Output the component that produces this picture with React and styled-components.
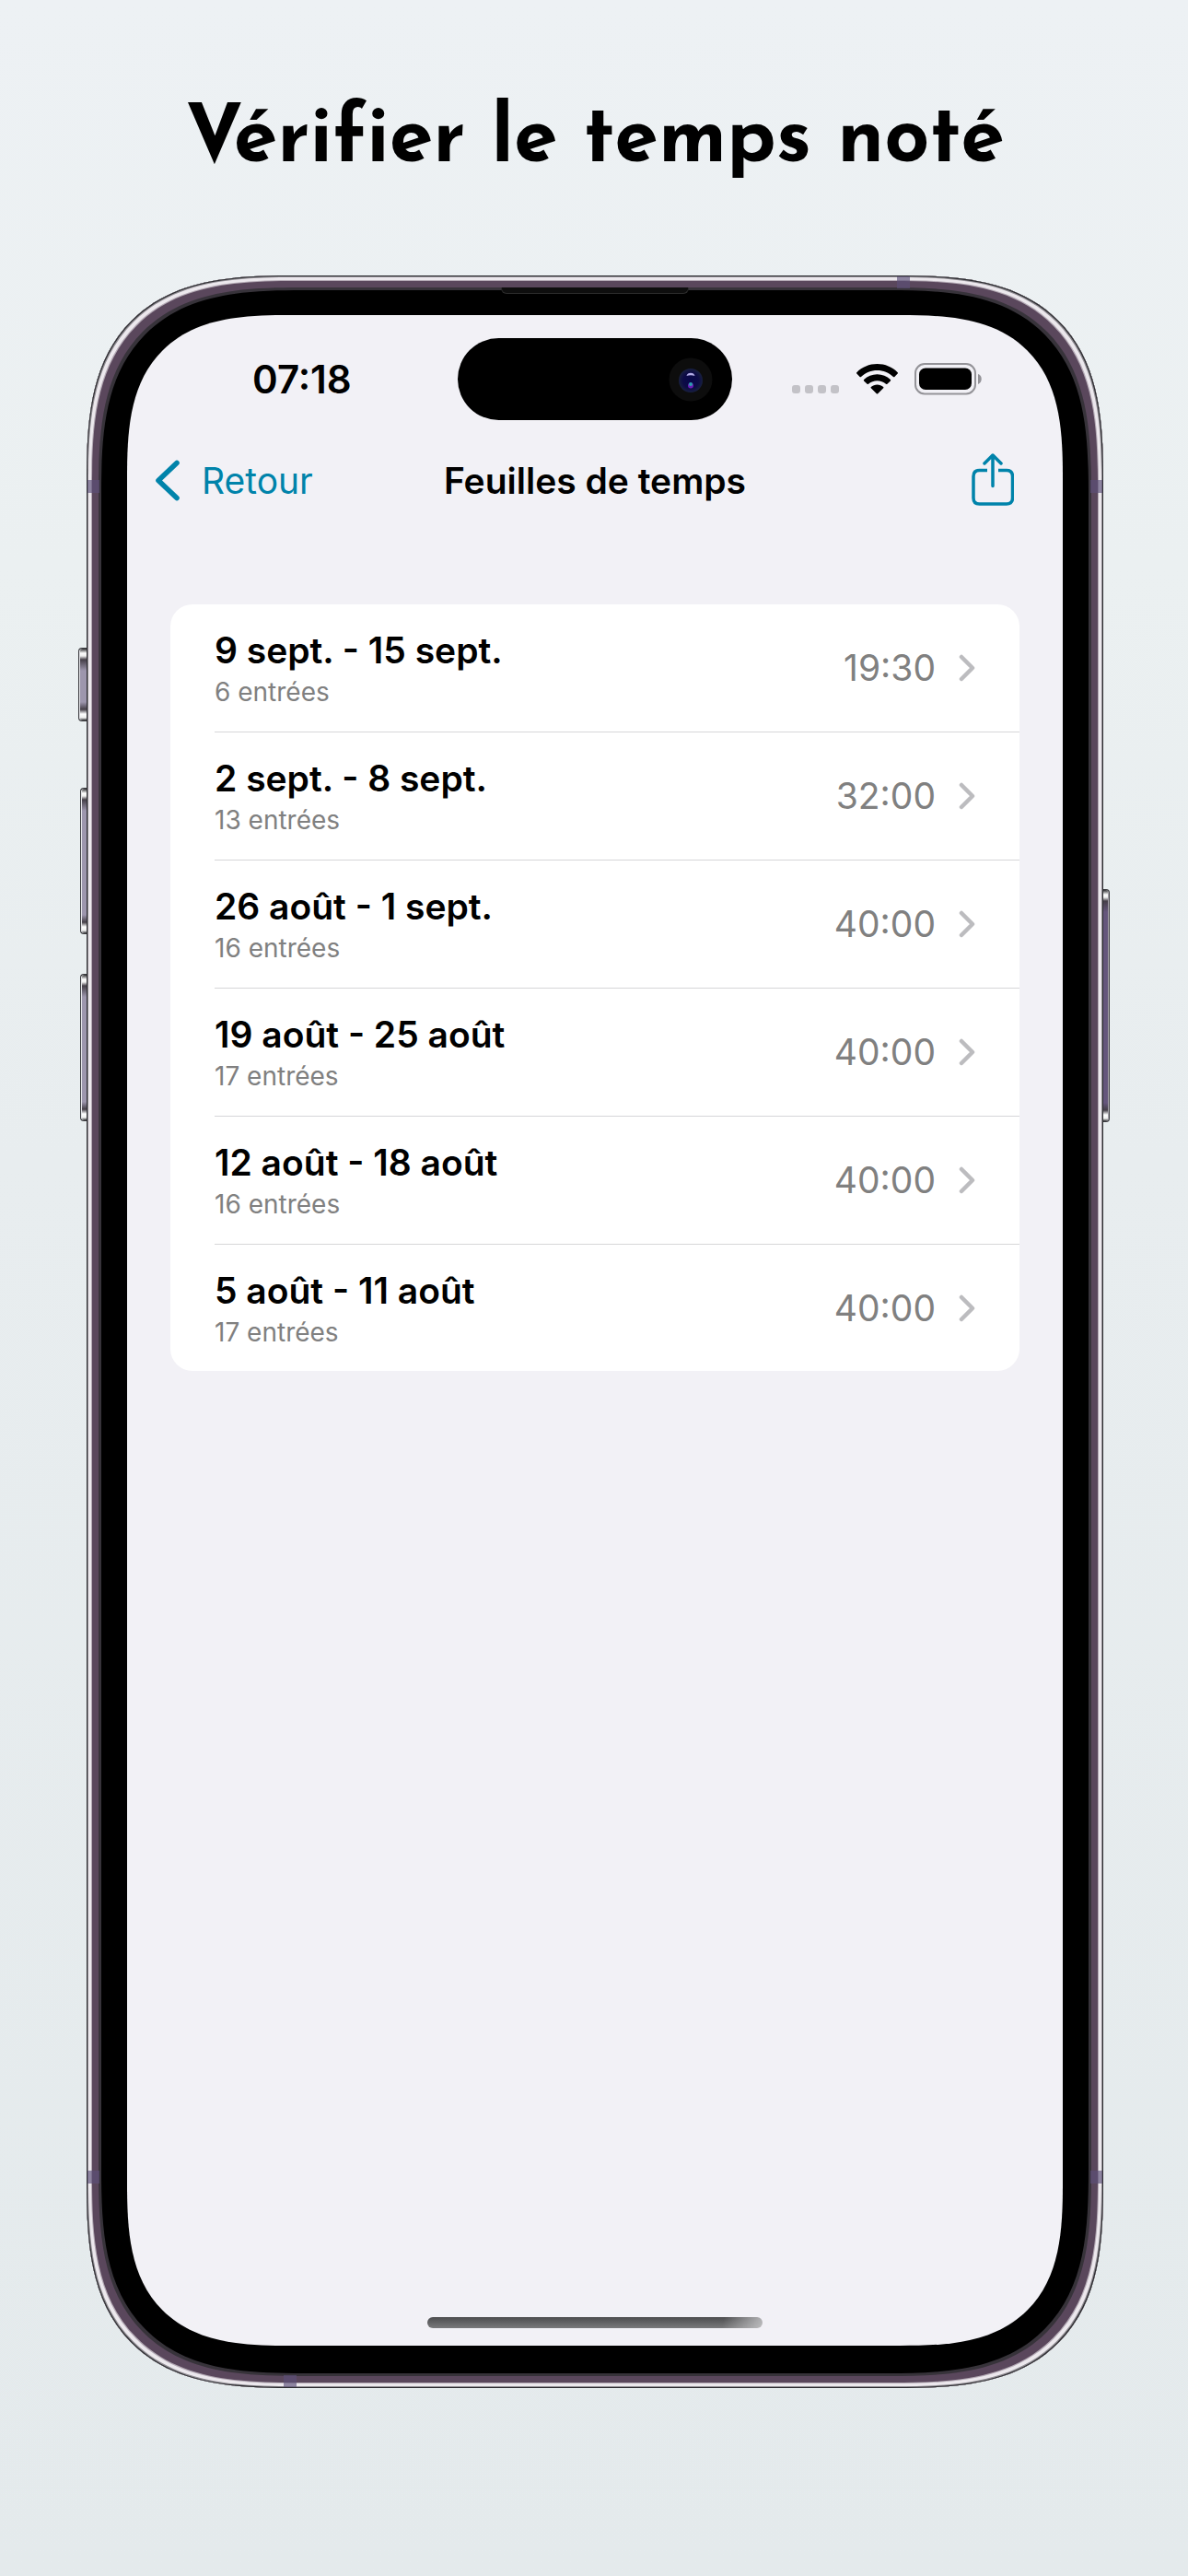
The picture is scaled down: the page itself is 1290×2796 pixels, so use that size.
import React from "react";
import styled, { createGlobalStyle, css } from "styled-components";

const GlobalStyle = createGlobalStyle`
  *, *::before, *::after { box-sizing: border-box; }
  body {
    margin: 0;
    background: #e4e9ec;
    font-family: Inter, "Noto Sans", sans-serif;
    color: #000;
  }
`;

const Page = styled.main`
  display: flex;
  flex-direction: column;
  align-items: center;
  gap: 91px;
  min-height: 100vh;
  padding: 100px 92px 96px 94px;
  background: linear-gradient(180deg, #edf1f4 0%, #ebf0f1 22%, #e8edef 45%, #e4eaec 100%);
`;

const Headline = styled.h1`
  margin: 0;
  font-family: "Josefin Sans", Lato, sans-serif;
  font-size: 86px;
  font-weight: 700;
  font-variant-ligatures: none;
  line-height: 108px;
  white-space: nowrap;
`;

const Phone = styled.div`
  position: relative;
  display: flex;
  width: 100%;
  aspect-ratio: 1104 / 2293;
  padding: 43px 44px 46px;
  border-radius: 168px;
  background: #000;
  box-shadow:
    inset 0 0 0 1px #2c2c30,
    inset 0 0 0 2px #8f8c92,
    inset 0 0 0 5px #ece8ed,
    inset 0 0 0 6px #b3a9b4,
    inset 0 0 0 13px #5a475c,
    inset 0 0 0 16px #37333a;

  @supports (corner-shape: squircle) {
    border-radius: 225px;
    corner-shape: superellipse(1.5);
  }
`;

const SideButton = styled.span`
  position: absolute;
  top: ${(p) => p.$top}px;
  height: ${(p) => p.$height}px;
  width: ${(p) => p.$width}px;
  border: 1px solid #3a3a3e;
  background: linear-gradient(180deg, #2b2b2e 0, #fff 5px, #eee 8px, #453f48 12px, ${(p) => p.$tone} 24px,
    ${(p) => p.$tone} calc(100% - 20px), #453f48 calc(100% - 12px), #fff calc(100% - 7px), #eee calc(100% - 3px), #2b2b2e 100%);
  ${(p) =>
    p.$side === "left"
      ? css`right: 100%; border-right: 0; border-radius: 4px 0 0 4px; box-shadow: inset 1px 0 0 #e4e4e8;`
      : css`left: 100%; border-left: 0; border-radius: 0 4px 4px 0; box-shadow: inset -1px 0 0 #a9a5ad;`}
`;

const Antenna = styled.span`
  position: absolute;
  background: rgba(92, 80, 120, 0.65);
  ${(p) => (p.$edge === "left" || p.$edge === "right" ? "width: 13px; height: 14px;" : "width: 14px; height: 13px;")}
  ${(p) => p.$edge}: 1px;
  ${(p) => (p.$edge === "left" || p.$edge === "right" ? "top" : "left")}: ${(p) => p.$at}%;
`;

const Speaker = styled.span`
  position: absolute;
  top: 13px;
  left: 50%;
  width: 204px;
  height: 7px;
  transform: translateX(-50%);
  border: 1px solid #2c2c2c;
  border-top: 0;
  border-radius: 0 0 6px 6px;
  background: #0e0e0e;
`;

const Screen = styled.div`
  position: relative;
  display: flex;
  flex: 1;
  flex-direction: column;
  min-width: 0;
  border-radius: 128px;
  background: #f2f1f6;

  @supports (corner-shape: squircle) {
    border-radius: 177px;
    corner-shape: superellipse(1.5);
  }
`;

const StatusBar = styled.header`
  display: grid;
  grid-template-columns: 1fr 298px 1fr;
  align-items: center;
  padding: 25px 1px 0;
`;

const Clock = styled.time`
  padding-left: 135px;
  font-size: 42px;
  font-weight: 600;
  line-height: 48px;
`;

const Island = styled.div`
  display: flex;
  align-items: center;
  justify-content: flex-end;
  height: 89px;
  padding-right: 21px;
  border-radius: 45px;
  background: #000;
`;

const StatusIcons = styled.div`
  display: flex;
  align-items: center;
  justify-content: flex-end;
  gap: 18px;
  padding-right: 86px;
`;

const Signal = styled.span`
  display: flex;
  align-self: flex-end;
  gap: 5px;
  margin: 0 1px 2px 0;
`;

const SignalDot = styled.i`
  width: 9px;
  height: 9px;
  border-radius: 3px;
  background: #c3c2c7;
`;

const NavBar = styled.nav`
  display: grid;
  grid-template-columns: 1fr auto 1fr;
  align-items: center;
  height: 112px;
  padding: 0 30px;
  margin-top: 10px;
`;

const BackButton = styled.button`
  display: flex;
  align-items: center;
  justify-self: start;
  gap: 24px;
  padding: 0;
  border: 0;
  background: none;
  color: #0083aa;
  font: 400 39px/48px Inter, "Noto Sans", sans-serif;
  cursor: pointer;
`;

const NavTitle = styled.h2`
  margin: 0;
  font-size: 39px;
  font-weight: 600;
  line-height: 48px;
`;

const ShareButton = styled.button`
  display: flex;
  justify-self: end;
  margin-right: 23px;
  padding: 0;
  border: 0;
  background: none;
  color: #0083aa;
  cursor: pointer;
`;

const Sheets = styled.ul`
  margin: 78px 47px 0;
  padding: 0;
  list-style: none;
  border-radius: 24px;
  background: #fff;
`;

const SheetItem = styled.li`
  padding-left: 48px;
`;

const SheetLink = styled.a`
  display: flex;
  align-items: center;
  height: ${(p) => (p.$last ? 137 : 139)}px;
  padding-right: 48px;
  border-bottom: ${(p) => (p.$last ? "0" : "1px solid #d6d6d8")};
  color: inherit;
  text-decoration: none;
`;

const SheetText = styled.span`
  display: flex;
  flex: 1;
  flex-direction: column;
  min-width: 0;
  padding-top: 4px;
`;

const Period = styled.strong`
  font-size: 39px;
  font-weight: 600;
  line-height: 48px;
`;

const Entries = styled.small`
  color: #808080;
  font-size: 28px;
  line-height: 42px;
`;

const Total = styled.span`
  margin-right: 25px;
  color: #808080;
  font-size: 39px;
  line-height: 48px;
`;

const HomeIndicator = styled.span`
  align-self: center;
  width: 364px;
  height: 12px;
  margin: auto 0 19px;
  border-radius: 6px;
  background:
    linear-gradient(100deg, rgba(200, 200, 202, 0) 88%, rgba(200, 200, 202, 0.85) 100%),
    linear-gradient(180deg, #4c4c4e, #7a7a7c);
`;

const Camera = () => (
  <svg width="48" height="48" viewBox="0 0 48 48" aria-hidden="true">
    <defs>
      <radialGradient id="lens">
        <stop offset="0" stopColor="#07074a" />
        <stop offset="0.65" stopColor="#0d0b46" />
        <stop offset="1" stopColor="#18203f" />
      </radialGradient>
    </defs>
    <circle cx="24" cy="24" r="23.5" fill="#0d0d0d" />
    <circle cx="24" cy="25" r="13" fill="url(#lens)" />
    <path d="M19.500 20C20 15.500 28 15.500 28.500 20Q24 18.500 19.500 20Z" fill="#b4aee8" />
    <circle cx="24" cy="30.500" r="3" fill="#6a1fb5" />
    <circle cx="24" cy="29" r="2" fill="#2b9fae" />
  </svg>
);

const Wifi = () => (
  <svg width="45" height="33" viewBox="0 0 45 33" aria-hidden="true">
    <path d="M22.500 0C31 0 39 3.300 44.700 9.200Q45.300 9.900 44.700 10.600L41.400 14Q40.700 14.600 40 14C35.200 9.500 29 7 22.500 7S9.800 9.500 5 14Q4.300 14.600 3.600 14L0.300 10.600Q-0.300 9.900 0.300 9.200C6 3.300 14 0 22.500 0Z" />
    <path d="M22.500 11.300C28 11.300 33 13.400 36.900 17Q37.500 17.700 36.900 18.400L33.400 21.800Q32.700 22.400 32 21.800C29.400 19.600 26 18.300 22.500 18.300S15.600 19.600 13 21.800Q12.300 22.400 11.600 21.800L8.100 18.400Q7.500 17.700 8.100 17C12 13.400 17 11.300 22.500 11.300Z" />
    <path d="M22.500 22.500C25 22.500 27.300 23.400 29.200 24.900Q29.800 25.600 29.200 26.300L23.200 32.200Q22.500 32.900 21.800 32.200L15.800 26.300Q15.200 25.600 15.800 24.900C17.700 23.400 20 22.500 22.500 22.500Z" />
  </svg>
);

const Battery = () => (
  <svg width="74" height="35" viewBox="0 0 74 35" aria-hidden="true">
    <rect x="1" y="1" width="65" height="32.500" rx="10" fill="none" stroke="#949398" strokeWidth="2" />
    <rect x="5" y="5.500" width="57" height="23.500" rx="7" />
    <path d="M69 12C74 13.500 74 21 69 23Z" fill="#949398" />
  </svg>
);

const BackChevron = () => (
  <svg width="27" height="46" viewBox="0 0 27 46" fill="none" stroke="currentColor" strokeWidth="5.600" strokeLinecap="round" strokeLinejoin="round" aria-hidden="true">
    <path d="M24 3.500L4 22.500L24 41.500" />
  </svg>
);

const ShareIcon = () => (
  <svg width="46" height="60" viewBox="0 0 46 60" fill="none" stroke="currentColor" strokeWidth="3.500" aria-hidden="true">
    <path d="M17 18.500H8.500Q2 18.500 2 25V48.500Q2 55 8.500 55H38Q44.500 55 44.500 48.500V25Q44.500 18.500 38 18.500H29" />
    <path d="M23 35.500V2.500M14 11L23 2L32 11" strokeLinecap="round" strokeLinejoin="round" />
  </svg>
);

const RowChevron = () => (
  <svg width="18" height="30" viewBox="0 0 18 30" fill="none" stroke="#bcbcbf" strokeWidth="4.500" strokeLinecap="round" strokeLinejoin="round" aria-hidden="true">
    <path d="M3 3L15 15L3 27" />
  </svg>
);

const sheets = [
  { period: "9 sept. - 15 sept.", entries: 6, total: "19:30" },
  { period: "2 sept. - 8 sept.", entries: 13, total: "32:00" },
  { period: "26 août - 1 sept.", entries: 16, total: "40:00" },
  { period: "19 août - 25 août", entries: 17, total: "40:00" },
  { period: "12 août - 18 août", entries: 16, total: "40:00" },
  { period: "5 août - 11 août", entries: 17, total: "40:00" },
];

export default function App() {
  return (
    <>
      <GlobalStyle />
      <Page>
        <Headline>Vérifier le temps noté</Headline>
        <Phone>
          <SideButton $side="left" $top={404} $height={80} $width={9} $tone="#9d96ad" />
          <SideButton $side="left" $top={556} $height={159} $width={7} $tone="#9d96ad" />
          <SideButton $side="left" $top={758} $height={160} $width={7} $tone="#9d96ad" />
          <SideButton $side="right" $top={666} $height={253} $width={7} $tone="#65567c" />
          <Antenna $edge="top" $at={79.7} />
          <Antenna $edge="bottom" $at={19.4} />
          <Antenna $edge="left" $at={9.7} />
          <Antenna $edge="left" $at={89.7} />
          <Antenna $edge="right" $at={9.7} />
          <Antenna $edge="right" $at={89.7} />
          <Speaker />
          <Screen>
            <StatusBar>
              <Clock>07:18</Clock>
              <Island>
                <Camera />
              </Island>
              <StatusIcons>
                <Signal>
                  <SignalDot />
                  <SignalDot />
                  <SignalDot />
                  <SignalDot />
                </Signal>
                <Wifi />
                <Battery />
              </StatusIcons>
            </StatusBar>
            <NavBar>
              <BackButton type="button">
                <BackChevron />
                Retour
              </BackButton>
              <NavTitle>Feuilles de temps</NavTitle>
              <ShareButton type="button" aria-label="Partager">
                <ShareIcon />
              </ShareButton>
            </NavBar>
            <Sheets>
              {sheets.map((sheet, index) => (
                <SheetItem key={sheet.period}>
                  <SheetLink href="#" $last={index === sheets.length - 1}>
                    <SheetText>
                      <Period>{sheet.period}</Period>
                      <Entries>{sheet.entries} entrées</Entries>
                    </SheetText>
                    <Total>{sheet.total}</Total>
                    <RowChevron />
                  </SheetLink>
                </SheetItem>
              ))}
            </Sheets>
            <HomeIndicator />
          </Screen>
        </Phone>
      </Page>
    </>
  );
}
